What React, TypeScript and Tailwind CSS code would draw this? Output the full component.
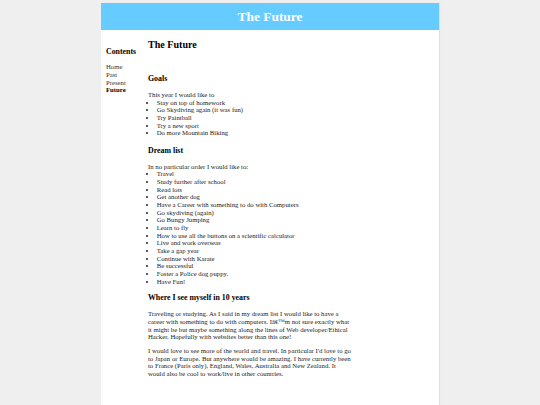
export default function App() {
  const goals = [
    "Stay on top of homework",
    "Go Skydiving again (it was fun)",
    "Try Paintball",
    "Try a new sport",
    "Do more Mountain Biking",
  ];
  const dreams = [
    "Travel",
    "Study further after school",
    "Read lots",
    "Get another dog",
    "Have a Career with something to do with Computers",
    "Go skydiving (again)",
    "Go Bungy Jumping",
    "Learn to fly",
    "How to use all the buttons on a scientific calculator",
    "Live and work overseas",
    "Take a gap year",
    "Continue with Karate",
    "Be successful",
    "Foster a Police dog puppy.",
    "Have Fun!",
  ];
  return (
    <div
      className="min-h-[405px] bg-[#efefef] pt-[3.3px] text-[#222222]"
      style={{ fontFamily: '"Liberation Serif", "Times New Roman", serif' }}
    >
      <div className="ml-[101px] min-h-[402px] w-[338px] bg-white shadow-[1px_0_1px_rgba(0,0,0,0.06)]">
        <div className="flex h-[27px] items-center justify-center bg-[#66ccff]">
          <h1 className="text-[13.44px] font-bold leading-[15px] text-white">The Future</h1>
        </div>
        <div className="flex flex-row">
          <div className="flex w-[47px] flex-col pl-[5px]">
            <h3 className="mt-[16.5px] text-[7.86px] font-bold leading-[9px] text-black">Contents</h3>
            <div className="mt-[7.4px] flex flex-col text-[6.72px] leading-[7.67px] text-[#333333]">
              <span>Home</span>
              <span>Past</span>
              <span>Present</span>
              <span className="font-bold text-black">Future</span>
            </div>
          </div>
          <div className="flex w-[206px] flex-col text-[6.72px] leading-[7.67px]">
            <h2 className="mt-[8.5px] text-[10.08px] font-bold leading-[11.5px] text-black">The Future</h2>
            <h3 className="mt-[23.8px] text-[7.86px] font-bold leading-[9px] text-black">Goals</h3>
            <p className="mt-[8px]">This year I would like to</p>
            <ul className="list-disc pl-[8.7px]">
              {goals.map((g) => (
                <li key={g}>{g}</li>
              ))}
            </ul>
            <h3 className="mt-[8.4px] text-[7.86px] font-bold leading-[9px] text-black">Dream list</h3>
            <p className="mt-[8px]">In no particular order I would like to:</p>
            <ul className="list-disc pl-[8.7px]">
              {dreams.map((g) => (
                <li key={g}>{g}</li>
              ))}
            </ul>
            <h3 className="mt-[8px] text-[7.86px] font-bold leading-[9px] text-black">
              Where I see myself in 10 years
            </h3>
            <p className="mt-[8px]">
              Traveling or studying. As I said in my dream list I would like to have a career with
              something to do with computers. Iâ€™m not sure exactly what it might be but maybe
              something along the lines of Web developer/Ethical Hacker. Hopefully with websites
              better than this one!
            </p>
            <p className="mt-[6px]">
              I would love to see more of the world and travel. In particular I'd love to go to
              Japan or Europe. But anywhere would be amazing. I have currently been to France (Paris
              only), England, Wales, Australia and New Zealand. It would also be cool to work/live
              in other countries.
            </p>
          </div>
        </div>
      </div>
    </div>
  );
}
